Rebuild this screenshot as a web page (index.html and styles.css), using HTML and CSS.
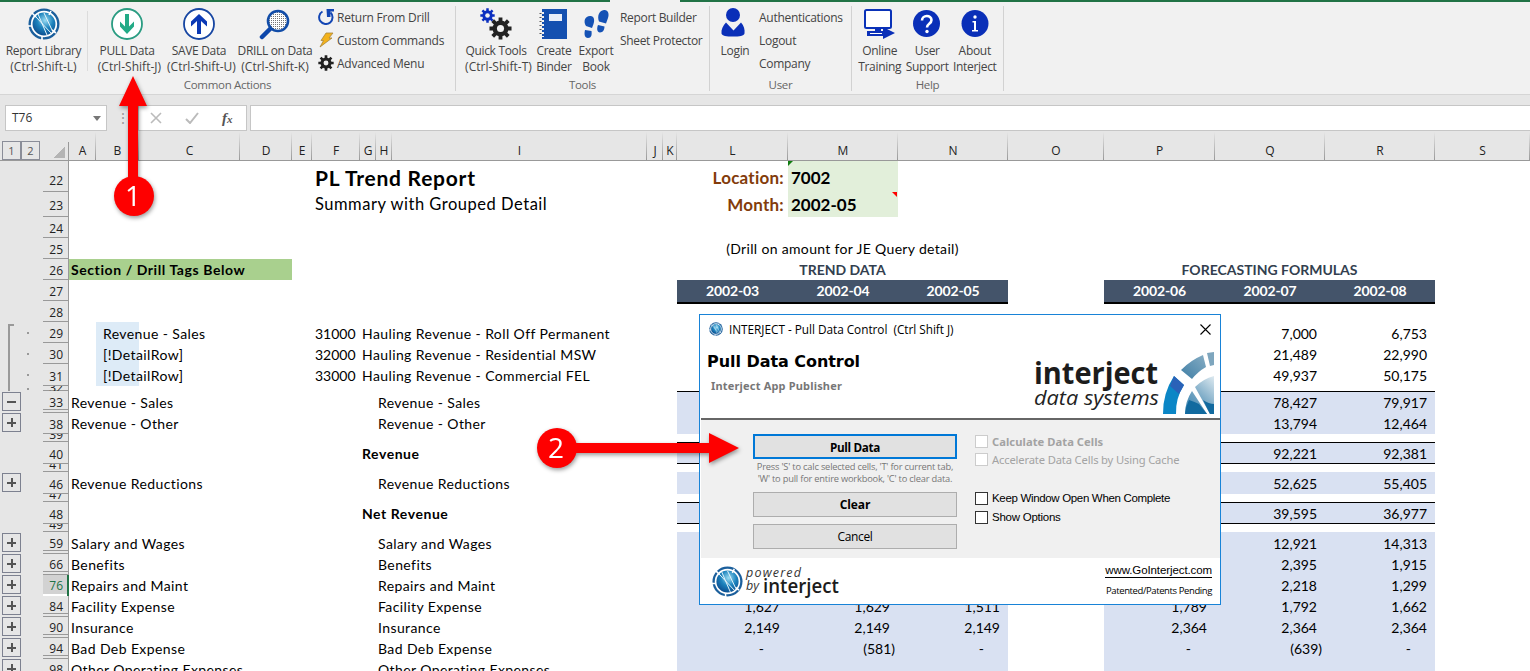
FILE: index.html
```
<!DOCTYPE html>
<html lang="en">
<head>
<meta charset="utf-8">
<title>PL Trend Report</title>
<link rel="stylesheet" href="styles.css">
</head>
<body>
<svg class="defs" width="0" height="0">
  <defs>
    <radialGradient id="globeFill" cx="55%" cy="35%" r="65%">
      <stop offset="0" stop-color="#9bdcf2"/><stop offset=".5" stop-color="#1d83bd"/><stop offset="1" stop-color="#0b4a8c"/>
    </radialGradient>
    <linearGradient id="arcFill" x1="0" y1="1" x2="1" y2="0">
      <stop offset="0" stop-color="#3f7ea5"/><stop offset="1" stop-color="#86adc4"/>
    </linearGradient>
    <linearGradient id="coreFill" gradientUnits="userSpaceOnUse" x1="151" y1="62" x2="182" y2="28">
      <stop offset="0" stop-color="#2f7fae"/><stop offset=".4" stop-color="#6a9fbf"/><stop offset="1" stop-color="#dbe8ef"/>
    </linearGradient>
    <symbol id="globe" viewBox="0 0 32 32">
      <circle cx="16" cy="16" r="15.5" fill="#1b5f9c"/>
      <circle cx="16" cy="16" r="12.300" fill="url(#globeFill)" stroke="#fff" stroke-width="1.700"/>
      <path d="M10 6l9 21M8 9l15 16M16 5l8 17" stroke="#e8f6fc" stroke-width="1" fill="none"/>
      <path d="M4 5l4 4M23 3l-2 4M28 25l-4-3M14 28v4M0 18h4" stroke="#fff" stroke-width="1.600"/>
    </symbol>
    <symbol id="gear" viewBox="-12 -12 24 24">
      <g fill="currentColor">
        <path d="M-2-11.500h4v23h-4zM-11.500-2h23v4h-23z"/>
        <path d="M-2-11.500h4v23h-4zM-11.500-2h23v4h-23z" transform="rotate(45)"/>
      </g>
      <circle r="6" fill="none" stroke="currentColor" stroke-width="4.600"/>
      <circle r="3.700" fill="#f1f1f1"/>
    </symbol>
  </defs>
</svg>

<header class="ribbon">
  <div class="tab-line"><span class="tab-gap"></span></div>
  <div class="groups">
    <section class="group g-common">
      <div class="tools">
        <div class="btn keys w-lib"><svg class="ico" viewBox="0 0 32 32"><use href="#globe"/></svg><span>Report Library<br>(Ctrl-Shift-L)</span></div>
        <div class="sep"></div>
        <div class="btn keys w-pull"><svg class="ico" viewBox="0 0 32 32"><circle cx="16" cy="16" r="15" fill="#fff" stroke="#2a9c82" stroke-width="1.800"/><path d="M14 6h4v12.500l5-5v5L16 26l-7-7.500v-5l5 5z" fill="#22aa86"/></svg><span>PULL Data<br>(Ctrl-Shift-J)</span></div>
        <div class="btn keys w-save"><svg class="ico" viewBox="0 0 32 32"><circle cx="16" cy="16" r="15" fill="#fff" stroke="#1746a2" stroke-width="1.800"/><path d="M14 26h4V13l6 5.500v-5L16 6l-8 7.500v5l6-5.500z" fill="#0b39b5"/></svg><span>SAVE Data<br>(Ctrl-Shift-U)</span></div>
        <div class="btn keys w-drill"><svg class="ico" viewBox="0 0 32 32"><defs><pattern id="mesh" width="2" height="2" patternUnits="userSpaceOnUse"><rect width="2" height="2" fill="#fff"/><rect width="1" height="1" fill="#777"/></pattern></defs><path d="M3 29l9-9" stroke="#0d47ab" stroke-width="4.500" stroke-linecap="round"/><circle cx="19" cy="13" r="10" fill="url(#mesh)" stroke="#124da8" stroke-width="2.600"/></svg><span>DRILL on Data<br>(Ctrl-Shift-K)</span></div>
        <ul class="list">
          <li><svg class="mini" viewBox="0 0 16 16"><path d="M4.500 2.500A6.700 6.700 0 1 0 12.500 3.500" fill="none" stroke="#1346b4" stroke-width="2"/><path d="M8.500 0H16v2.500h-3.500V8H9z" fill="#1346b4"/></svg>Return From Drill</li>
          <li><svg class="mini" viewBox="0 0 16 16"><path d="M8 1h7l-4 5h3L2 15l3.500-6.500H3z" fill="#f3b21b" stroke="#a8853c" stroke-width=".8"/></svg>Custom Commands</li>
          <li><svg class="mini dark" viewBox="0 0 16 16"><use href="#gear" width="16" height="16"/></svg>Advanced Menu</li>
        </ul>
      </div>
      <h2>Common Actions</h2>
    </section>
    <section class="group g-tools">
      <div class="tools">
        <div class="btn keys w-quick"><svg class="ico" viewBox="0 0 32 32"><g color="#0b2fc0"><use href="#gear" x="0" y="0" width="15" height="15"/></g><g color="#222"><use href="#gear" x="9" y="9" width="23" height="23"/></g></svg><span>Quick Tools<br>(Ctrl-Shift-T)</span></div>
        <div class="btn w-create"><svg class="ico" viewBox="0 0 32 32"><path d="M4 1h25v30H4z" fill="#1450b0"/><path d="M11 6h13v7H11z" fill="#e8eef8"/><path d="M4 4v25" stroke="#f1f1f1" stroke-width="4" stroke-dasharray="2 2"/><path d="M2.500 5v24" stroke="#555" stroke-width="2" stroke-dasharray="1 3"/></svg><span>Create<br>Binder</span></div>
        <div class="btn w-export"><svg class="ico" viewBox="0 0 32 32" fill="#1552b5"><path d="M10 8c4-.5 5 4 3.500 8l-1.500 4-6-2C3 13 5 8.500 10 8zM5 22l6.500 1c.5 4 0 7-3.500 7s-4-4-3-8zM24 2c4-.5 5.500 4 4 8l-2 5.500-7-2C17 8 19 2.500 24 2zM18 17l6.500 1.500c0 3-1.500 6-4.500 6s-3.500-4-2-7.500z"/></svg><span>Export<br>Book</span></div>
        <ul class="list"><li>Report Builder</li><li>Sheet Protector</li></ul>
      </div>
      <h2>Tools</h2>
    </section>
    <section class="group g-user">
      <div class="tools">
        <div class="btn w-login"><svg class="ico" viewBox="0 0 32 32" fill="#0a2fb8"><circle cx="14" cy="7" r="7"/><path d="M7 14.500l7.500 8 7.500-8c3 3 4 7 3.500 11-.5 2.500-5 3-11.500 3s-11-.5-11.500-3C2 21.500 4 17.500 7 14.500z"/></svg><span>Login</span></div>
        <ul class="list"><li>Authentications</li><li>Logout</li><li>Company</li></ul>
      </div>
      <h2>User</h2>
    </section>
    <section class="group g-help">
      <div class="tools">
        <div class="btn w-help"><svg class="ico" viewBox="0 0 32 32"><rect x="1" y="2" width="26" height="18" rx="1.500" fill="#fff" stroke="#0a32b8" stroke-width="2"/><path d="M11 20h6v3h2v-4l12 6-12 6v-3H3v-5h8z" fill="#0a2fb8"/><path d="M6 25.500h12" stroke="#fff"/></svg><span>Online<br>Training</span></div>
        <div class="btn w-help"><svg class="ico" viewBox="0 0 32 32"><circle cx="15.500" cy="15.500" r="13.500" fill="#0a2fb8"/><path d="M11 12.500c0-6 9.500-6 9.500-.5 0 4-4.500 3.500-4.500 7.500" fill="none" stroke="#fff" stroke-width="2.600"/><circle cx="16" cy="23.500" r="1.700" fill="#fff"/></svg><span>User<br>Support</span></div>
        <div class="btn w-help"><svg class="ico" viewBox="0 0 32 32"><circle cx="16" cy="15.500" r="13.500" fill="#0a2fb8"/><path d="M13.500 13H17v9h2v1.500h-6V22h2v-7.500h-1.500z" fill="#fff"/><circle cx="16" cy="9" r="1.700" fill="#fff"/></svg><span>About<br>Interject</span></div>
      </div>
      <h2>Help</h2>
    </section>
  </div>
</header>

<div class="formula-bar">
  <div class="name-box">T76<i class="caret"></i></div>
  <div class="grip">⋮</div>
  <div class="fx-box">
    <svg width="12" height="12" viewBox="0 0 12 12"><path d="M1 1l10 10M11 1L1 11" stroke="#bbb" stroke-width="1.600"/></svg>
    <svg width="14" height="12" viewBox="0 0 14 12"><path d="M1 7l4 4 8-10" fill="none" stroke="#bbb" stroke-width="2"/></svg>
    <em>f<small>x</small></em>
  </div>
  <div class="formula-input"></div>
</div>

<main class="sheet">
  <div class="row cols">
    <div class="gut levels"><b>1</b><b>2</b></div><div class="corner"></div>
    <span>A</span><span>B</span><span>C</span><span>D</span><span>E</span><span>F</span><span>G</span><span>H</span><span>I</span><span>J</span><span>K</span><span>L</span><span>M</span><span>N</span><span>O</span><span>P</span><span>Q</span><span>R</span><span>S</span>
  </div>
  <div class="row h31 big"><div class="gut"></div><div class="hd">22</div><div class="f title">PL Trend Report</div><div class="l label">Location:</div><div class="m input tick-g">7002</div></div>
  <div class="row h25 big"><div class="gut"></div><div class="hd">23</div><div class="f subtitle">Summary with Grouped Detail</div><div class="l label">Month:</div><div class="m input tick-r">2002-05</div></div>
  <div class="row"><div class="gut"></div><div class="hd">24</div></div>
  <div class="row"><div class="gut"></div><div class="hd">25</div><div class="trend note">(Drill on amount for JE Query detail)</div></div>
  <div class="row"><div class="gut"></div><div class="hd">26</div><div class="tags">Section / Drill Tags Below</div><div class="trend head">TREND DATA</div><div class="fore head">FORECASTING FORMULAS</div></div>
  <div class="row periods"><div class="gut"></div><div class="hd">27</div><div class="l">2002-03</div><div class="m">2002-04</div><div class="n">2002-05</div><div class="p">2002-06</div><div class="q">2002-07</div><div class="r">2002-08</div></div>
  <div class="row"><div class="gut"></div><div class="hd">28</div></div>
  <div class="row low"><div class="gut bracket first"><i class="dot"></i></div><div class="hd">29</div><div class="b tint">Revenue - Sales</div><div class="f num0">31000</div><div class="g">Hauling Revenue - Roll Off Permanent</div><div class="q num">7,000</div><div class="r num">6,753</div></div>
  <div class="row low"><div class="gut bracket"><i class="dot"></i></div><div class="hd">30</div><div class="b tint">[!DetailRow]</div><div class="f num0">32000</div><div class="g">Hauling Revenue - Residential MSW</div><div class="q num">21,489</div><div class="r num">22,990</div></div>
  <div class="row h22"><div class="gut bracket"><i class="dot"></i></div><div class="hd">31</div><div class="b tint">[!DetailRow]</div><div class="f num0">33000</div><div class="g">Hauling Revenue - Commercial FEL</div><div class="q num">49,937</div><div class="r num">50,175</div></div>
  <div class="row h5"><div class="gut bracket"><i class="dot"></i></div><div class="hd">32</div></div>
  <div class="row h22 fill top"><div class="gut"><i class="box minus"></i></div><div class="hd dbl">33</div><div class="a">Revenue - Sales</div><div class="h">Revenue - Sales</div><div class="q num">78,427</div><div class="r num">79,917</div></div>
  <div class="row fill"><div class="gut"><i class="box"></i></div><div class="hd">38</div><div class="a">Revenue - Other</div><div class="h">Revenue - Other</div><div class="q num">13,794</div><div class="r num">12,464</div></div>
  <div class="row h8"><div class="gut"></div><div class="hd">39</div></div>
  <div class="row h22 fill top bottom"><div class="gut"></div><div class="hd">40</div><div class="g bold">Revenue</div><div class="q num">92,221</div><div class="r num">92,381</div></div>
  <div class="row h8"><div class="gut"></div><div class="hd">41</div></div>
  <div class="row h22 fill"><div class="gut"><i class="box"></i></div><div class="hd">46</div><div class="a">Revenue Reductions</div><div class="h">Revenue Reductions</div><div class="q num">52,625</div><div class="r num">55,405</div></div>
  <div class="row h8"><div class="gut"></div><div class="hd">47</div></div>
  <div class="row h22 fill top bottom"><div class="gut"></div><div class="hd">48</div><div class="g bold">Net Revenue</div><div class="q num">39,595</div><div class="r num">36,977</div></div>
  <div class="row h8"><div class="gut"></div><div class="hd">49</div></div>
  <div class="row h22 fill"><div class="gut"><i class="box"></i></div><div class="hd dbl">59</div><div class="a">Salary and Wages</div><div class="h">Salary and Wages</div><div class="q num">12,921</div><div class="r num">14,313</div></div>
  <div class="row fill"><div class="gut"><i class="box"></i></div><div class="hd dbl">66</div><div class="a">Benefits</div><div class="h">Benefits</div><div class="q num">2,395</div><div class="r num">1,915</div></div>
  <div class="row fill"><div class="gut"><i class="box"></i></div><div class="hd dbl current">76</div><div class="a">Repairs and Maint</div><div class="h">Repairs and Maint</div><div class="q num">2,218</div><div class="r num">1,299</div></div>
  <div class="row fill"><div class="gut"><i class="box"></i></div><div class="hd dbl">84</div><div class="a">Facility Expense</div><div class="h">Facility Expense</div><div class="l num">1,627</div><div class="m num">1,629</div><div class="n num">1,511</div><div class="p num">1,789</div><div class="q num">1,792</div><div class="r num">1,662</div></div>
  <div class="row fill"><div class="gut"><i class="box"></i></div><div class="hd dbl">90</div><div class="a">Insurance</div><div class="h">Insurance</div><div class="l num">2,149</div><div class="m num">2,149</div><div class="n num">2,149</div><div class="p num">2,364</div><div class="q num">2,364</div><div class="r num">2,364</div></div>
  <div class="row fill"><div class="gut"><i class="box"></i></div><div class="hd dbl">94</div><div class="a">Bad Deb Expense</div><div class="h">Bad Deb Expense</div><div class="l num nil">-</div><div class="m num neg">(581)</div><div class="n num nil">-</div><div class="p num nil">-</div><div class="q num neg">(639)</div><div class="r num nil">-</div></div>
  <div class="row fill"><div class="gut"><i class="box"></i></div><div class="hd dbl">98</div><div class="a">Other Operating Expenses</div><div class="h">Other Operating Expenses</div></div>
</main>

<div class="dialog">
  <div class="dlg-head">
    <div class="dlg-left">
      <div class="dlg-title"><svg width="14" height="14" viewBox="0 0 32 32"><use href="#globe"/></svg><span>INTERJECT - Pull Data Control&nbsp; (Ctrl Shift J)</span></div>
      <h1>Pull Data Control</h1>
      <p>Interject App Publisher</p>
    </div>
    <div class="dlg-right">
      <svg class="close" width="11" height="11" viewBox="0 0 11 11"><path d="M.5.5l10 10M10.500.5l-10 10" stroke="#000" stroke-width="1.100"/></svg>
      <svg class="brand" width="181" height="64" viewBox="0 0 181 64">
        <text x="0" y="33" class="brand-name" textLength="124" lengthAdjust="spacingAndGlyphs">interject</text>
        <text x="0" y="54" class="brand-sub" textLength="125" lengthAdjust="spacingAndGlyphs">data systems</text>
        <path d="M129 63A68 68 0 0 1 140 25l10 9a50 50 0 0 0-8 29z" fill="#0b86c6"/>
        <path d="M140 25l10 9-5 9-9-8z" fill="#2a62b8"/>
        <path d="M147 19a68 68 0 0 1 22-15l3 12a50 50 0 0 0-14 12z" fill="url(#arcFill)"/>
        <path d="M173 2l7-1v13l-4 1z" fill="#7ea6be"/>
        <path d="M151 63a42 42 0 0 1 7-23l15 23zM161 36a42 42 0 0 1 19-11v38h-4z" fill="url(#coreFill)"/>
        <path d="M151 63q1-8 4-14 6 2 10 4l8 10zM169 49q6 4 11 4v10h-4z" fill="#126a9f"/>
      </svg>
    </div>
  </div>
  <div class="dlg-body">
    <div class="actions">
      <button class="primary">Pull Data</button>
      <p>Press 'S' to calc selected cells, 'T' for current tab,<br>'W' to pull for entire workbook, 'C' to clear data.</p>
      <button class="strong">Clear</button>
      <button class="plain">Cancel</button>
    </div>
    <div class="options">
      <label class="off calc"><i></i>Calculate Data Cells</label>
      <label class="off accel"><i></i>Accelerate Data Cells by Using Cache</label>
      <label class="keep"><i></i>Keep Window Open When Complete</label>
      <label class="show"><i></i>Show Options</label>
    </div>
  </div>
  <div class="dlg-foot">
    <svg width="130" height="36" viewBox="0 0 130 36">
      <use href="#globe" x="0" y="3" width="31" height="31"/>
      <text x="34" y="14" class="pow" textLength="55">powered</text>
      <text x="34" y="27" class="pow" textLength="13">by</text>
      <text x="51" y="30" class="pow-name" textLength="76" lengthAdjust="spacingAndGlyphs">interject</text>
    </svg>
    <div class="links"><a>www.GoInterject.com</a><span>Patented/Patents Pending</span></div>
  </div>
</div>

<svg class="callout one" width="50" height="150" viewBox="0 0 50 150"><path d="M28 4l14 30h-9v76H23V34h-9z" fill="#fe0000"/><circle cx="29" cy="124" r="20" fill="#fe0000"/><text x="28" y="134" text-anchor="middle">1</text></svg>
<svg class="callout two" width="210" height="50" viewBox="0 0 210 50"><path d="M205 25l-30-15v10H35v10h140v10z" fill="#fe0000"/><circle cx="23" cy="25" r="20" fill="#fe0000"/><text x="22" y="35" text-anchor="middle">2</text></svg>
</body>
</html>
```

FILE: styles.css
```
* { box-sizing: border-box; }
body { margin: 0; width: 1530px; height: 671px; overflow: hidden; position: relative; background: #fff; color: #000; font-family: Lato, "Open Sans", sans-serif; }
h1, h2, p, ul { margin: 0; padding: 0; font-weight: normal; }
.defs { position: absolute; }

/* ribbon */
.ribbon { height: 95px; background: #f1f1f1; border-bottom: 1px solid #d5d5d5; font-family: "Open Sans", "Noto Sans", sans-serif; font-size: 12px; letter-spacing: -.22px; color: #444; }
.tab-line { height: 2px; background: #217346; }
.tab-gap { display: block; width: 70px; height: 2px; margin-left: 610px; background: #f1f1f1; }
.groups { display: flex; }
.group { height: 85px; margin-top: 4px; padding-top: 2px; border-right: 1px solid #d2d2d2; display: flex; flex-direction: column; }
.group h2 { font-size: 11.5px; line-height: 14px; margin-top: 3px; text-align: center; color: #666; letter-spacing: -.3px; }
.g-common { width: 456px; }
.g-tools { width: 254px; }
.g-user { width: 142px; }
.g-help { width: 152px; }
.tools { display: flex; height: 68px; }
.btn { display: flex; flex-direction: column; align-items: center; text-align: center; line-height: 16px; white-space: nowrap; }
.btn span { margin-top: 3px; letter-spacing: -.3px; }
.keys span { letter-spacing: .02px; }
.keys span::first-line { letter-spacing: -.33px; }
.ico { width: 32px; height: 32px; flex: none; }
.w-lib { width: 87px; }
.w-pull { width: 72px; margin-left: 3px; }
.w-save { width: 72px; }
.w-drill { width: 80px; }
.w-quick { width: 72px; margin-left: 4px; }
.w-create { width: 44px; }
.w-export { width: 40px; }
.w-login { width: 40px; margin-left: 5px; }
.w-help { width: 47.5px; }
.g-help .tools { padding-left: 4px; }
.sep { width: 1px; height: 60px; margin-top: 3px; background: #dcdcdc; }
.list { list-style: none; margin: -2.5px 0 0 3px; line-height: 23px; }
.list li { display: flex; align-items: center; gap: 3px; white-space: nowrap; height: 23px; }
.g-tools .list, .g-user .list { margin-left: 4px; letter-spacing: -.33px; }
.g-user .list { letter-spacing: -.28px; }
.mini { width: 16px; height: 16px; }
.dark { color: #222; }

/* formula bar */
.formula-bar { display: flex; height: 37px; padding: 10px 0 0 5px; background: #e6e6e6; }
.name-box { width: 102px; height: 26px; border: 1px solid #c6c6c6; background: #fff; font: 12px/24px "Open Sans", sans-serif; padding: 0 5px 0 6px; display: flex; justify-content: space-between; align-items: center; color: #333; }
.caret { border: 4px solid transparent; border-top: 5px solid #777; border-bottom: 0; }
.grip { width: 31px; text-align: center; color: #999; line-height: 25px; font-size: 14px; }
.fx-box { width: 109px; height: 26px; border: 1px solid #c6c6c6; background: #fff; display: flex; align-items: center; gap: 23px; padding-left: 11px; }
.fx-box em { font: italic bold 15px "Liberation Serif", serif; color: #555; }
.fx-box small { font-size: 11px; }
.formula-input { flex: 1; height: 26px; margin-left: 3px; border: 1px solid #c6c6c6; border-right: 0; background: #fff; }

/* sheet grid */
.row { display: grid; height: 21px; grid-template-rows: 100%; font-size: 14px; line-height: 21px; white-space: nowrap;
  grid-template-columns: 43px 26px 27px 43px 101px 52px 20px 48px 16px 16px 255px 16px 14px 111px 110px 110px 96px 111px 110px 110px 95px; }
.row > * { grid-row: 1; }
.row > div { z-index: 1; }
.h31 { height: 31px; line-height: 34px; }
.h25 { height: 25px; line-height: 25px; }
.h22 { height: 22px; line-height: 23px; }
.h8 { height: 8px; }
.h5 { height: 5px; }
.low { line-height: 23px; }
.gut { grid-column: 1; background: #e6e6e6; position: relative; padding-left: 2px; display: flex; align-items: flex-end; }
.hd { grid-column: 2; background: linear-gradient(#999, #999) bottom / 100% 1px no-repeat #e6e6e6; border-right: 1px solid #999; text-align: right; padding-right: 5px; font: 12px/19px "Open Sans", sans-serif; color: #222; overflow: hidden; display: flex; align-items: flex-end; justify-content: flex-end; }
.h31 .hd { padding-bottom: 2px; }
.h25 .hd { padding-bottom: 2px; }
.h8 .hd { line-height: 14px; }
.h5 .hd { line-height: 7px; }
.dbl { line-height: 20px; background: linear-gradient(#999, #999) 0 100% / 100% 1px no-repeat, linear-gradient(#999, #999) 0 calc(100% - 3px) / 100% 1px no-repeat #e6e6e6; }
.current { color: #217346; background: linear-gradient(#fff, #fff) 0 100% / 100% 2px no-repeat #d2d2d2; border-right: 2px solid #217346; padding-right: 4px; }
.cols { height: 29px; background: #e6e6e6; border-bottom: 1px solid #999; font: 12px/37px "Open Sans", sans-serif; color: #222; }
.cols span { text-align: center; background: linear-gradient(#e6e6e6, #999) right / 1px 100% no-repeat; }
.levels b { width: 19px; height: 19px; border: 1px solid #8a8d98; text-align: center; font: 11px/17px "Open Sans", sans-serif; color: #555; }
.corner { grid-column: 2; align-self: end; justify-self: end; width: 25px; height: 18px; padding: 0; border-right: 1px solid #999; background: linear-gradient(135deg, transparent 50%, #b4b4b4 50%) 9px 4px / 12px 12px no-repeat; }
.box { width: 19px; height: 19px; margin-bottom: 2px; border: 1px solid #7d8190; background: linear-gradient(#555, #555) center / 9px 2px no-repeat, linear-gradient(#555, #555) center / 2px 9px no-repeat; }
.box.minus { background: linear-gradient(#555, #555) center / 9px 2px no-repeat; }
.bracket { background: linear-gradient(#999, #999) 8px 0 / 2px 100% no-repeat #e6e6e6; align-items: center; }
.bracket.first { background: linear-gradient(#999, #999) 8px 2px / 6px 2px no-repeat, linear-gradient(#999, #999) 8px 2px / 2px 100% no-repeat #e6e6e6; }
.dot { width: 2px; height: 2px; margin-left: 25px; background: #999; }
.a { grid-column: 3; padding-left: 2px; }
.b { grid-column: 4; padding-left: 7px; }
.f { grid-column: 8; padding-left: 3px; }
.g { grid-column: 9; padding-left: 2px; }
.h { grid-column: 10; padding-left: 2px; }
.l { grid-column: 14; }
.m { grid-column: 15; }
.n { grid-column: 16; }
.p { grid-column: 18; }
.q { grid-column: 19; }
.r { grid-column: 20; }
.a, .b, .g, .h { letter-spacing: .4px; }
.bold { font-weight: bold; letter-spacing: .55px; }
.tint { background: #ddebf7; }
.num0 { text-align: right; padding-right: 6px; }
.num { text-align: right; padding-right: 8px; }
.num.nil { padding-right: 24px; }
.num.neg { padding-right: 3px; }
.big { font-size: 16px; }
.title { font-size: 21px; font-weight: bold; letter-spacing: .75px; line-height: 33px; }
.subtitle { font-size: 16.5px; letter-spacing: .52px; }
.label { font-weight: bold; color: #833c0b; text-align: right; padding-right: 4px; font-size: 17px; letter-spacing: .25px; }
.input { background: #e2efda; font-weight: bold; padding-left: 3px; font-size: 17px; position: relative; }
.tick-g::before, .tick-r::before { content: ""; position: absolute; top: 0; left: 0; border-top: 5px solid #107c10; border-right: 5px solid transparent; }
.tick-r::before { left: auto; right: 1px; border-top-color: #f00; border-right: 0; border-left: 5px solid transparent; }
.tags { grid-column: 3 / 7; background: #a9d08e; font-weight: bold; padding-left: 2px; letter-spacing: .58px; }
.trend { grid-column: 14 / 17; text-align: center; }
.fore { grid-column: 18 / 21; text-align: center; }
.note { letter-spacing: .33px; }
.head { font-weight: bold; color: #333f4f; }
.periods::before, .periods::after { content: ""; background: #44546a; border-bottom: 2px solid #000; height: 22px; }
.periods > .l, .periods > .m, .periods > .n, .periods > .p, .periods > .q, .periods > .r { color: #fff; font-weight: bold; text-align: center; letter-spacing: -.1px; }
.row::before { grid-column: 14 / 17; grid-row: 1; }
.row::after { grid-column: 18 / 21; grid-row: 1; }
.fill::before, .fill::after { content: ""; background: #d9e1f2; }
.top::before, .top::after { border-top: 1px solid #000; }
.bottom::before, .bottom::after { border-bottom: 1px solid #000; }

/* dialog */
.dialog { position: absolute; left: 699px; top: 314px; width: 522px; height: 291px; border: 1px solid #1883d7; background: #fff; z-index: 5; display: flex; flex-direction: column; }
.dlg-head { height: 105px; display: flex; justify-content: space-between; border-bottom: 2px solid #666; margin-left: 1px; }
.dlg-left { padding-left: 6px; }
.dlg-title { display: flex; align-items: center; gap: 6px; height: 28px; padding-left: 2px; margin-bottom: 2px; font: 11.8px "Open Sans", sans-serif; letter-spacing: -.03px; white-space: nowrap; }
.dlg-left h1 { font: bold 16px/34px "DejaVu Sans", sans-serif; letter-spacing: -.05px; }
.dlg-left p { font: bold 11px/14px "Noto Sans", sans-serif; letter-spacing: .18px; color: #777; padding-left: 4px; }
.dlg-right { display: flex; flex-direction: column; align-items: flex-end; padding: 9px 5px 0 0; }
.close { margin: 0 4px 0 0; }
.brand { margin-top: 16px; }
.brand-name { font: bold 30px "Open Sans", sans-serif; fill: #1c1c1c; }
.brand-sub { font: italic 20px "Open Sans", sans-serif; fill: #222; }
.dlg-body { height: 138px; background: #f0f0f0; margin-left: 1px; display: flex; gap: 18px; padding: 14px 0 0 52px; }
.actions { width: 204px; display: flex; flex-direction: column; }
.actions p { font: 9.3px/12px "Open Sans", sans-serif; letter-spacing: -.2px; color: #777; text-align: center; white-space: nowrap; height: 33px; padding-top: 2px; }
.actions button { height: 25px; padding: 0; border: 1px solid #adadad; background: #e1e1e1; color: #000; font: 12px/20px "Open Sans", sans-serif; letter-spacing: -.35px; }
.actions .primary { border: 2px solid #0078d7; font-weight: bold; font-size: 11.7px; }
.actions .strong { font-weight: bold; letter-spacing: -.1px; }
.actions .plain { margin-top: 7px; }
.options { display: flex; flex-direction: column; font: 11.5px "Liberation Sans", sans-serif; white-space: nowrap; }
.options label { display: flex; align-items: center; gap: 4px; height: 18px; letter-spacing: -.33px; }
.options i { width: 13px; height: 13px; border: 1px solid #333; background: #fff; }
.options .off { color: #a3a3a3; font-family: "Noto Sans", sans-serif; font-size: 11.2px; letter-spacing: -.15px; }
.options .off i { border-color: #ccc; }
.options .calc { font-weight: bold; margin-top: -2px; letter-spacing: .05px; }
.options .keep { margin-top: 21px; }
.options .show { margin-top: 1px; letter-spacing: -.25px; }
.dlg-foot { flex: 1; display: flex; justify-content: space-between; padding: 5px 8px 0 12px; }
.pow { font: italic 12.5px "Open Sans", sans-serif; fill: #333; }
.pow-name { font: 600 20px "Open Sans", sans-serif; fill: #1c1c1c; }
.links { display: flex; flex-direction: column; align-items: flex-end; padding-top: 1px; }
.links a { font: 11.5px/13px "Liberation Sans", sans-serif; letter-spacing: -.1px; border-bottom: 1px solid #000; }
.links span { font: 9.5px/14px "Open Sans", sans-serif; letter-spacing: -.4px; margin-top: 6px; }

/* numbered callouts */
.callout { position: absolute; z-index: 6; filter: drop-shadow(1px 2px 2px rgba(0, 0, 0, .4)); }
.callout text { font: 28px "Open Sans", sans-serif; fill: #fff; }
.one { left: 105px; top: 72px; }
.two { left: 534px; top: 423px; }
```
